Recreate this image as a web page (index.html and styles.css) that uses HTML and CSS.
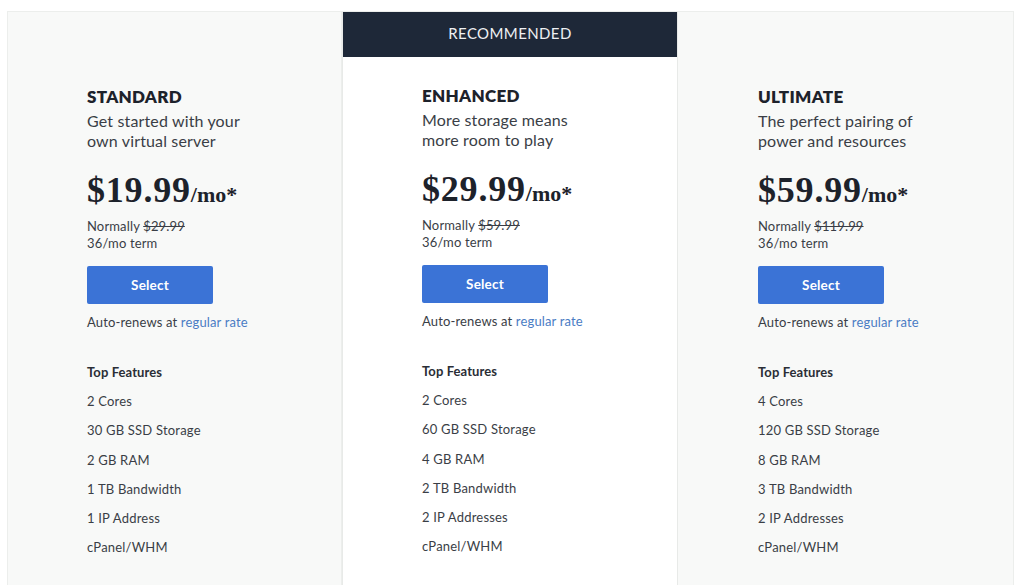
FILE: index.html
```html
<!DOCTYPE html>
<html lang="en">
<head>
<meta charset="utf-8">
<title>Plans</title>
<link rel="stylesheet" href="styles.css">
</head>
<body>
<div class="plans">
  <section class="plan">
    <div class="body">
      <h2 class="name">STANDARD</h2>
      <p class="desc">Get started with your<br>own virtual server</p>
      <div class="price"><span class="amount">$19.99</span><span class="per">/mo*</span></div>
      <p class="normal">Normally <s>$29.99</s><br>36/mo term</p>
      <button class="select">Select</button>
      <p class="renew">Auto-renews at <a href="#">regular rate</a></p>
      <h3 class="feat-title">Top Features</h3>
      <ul class="features">
        <li>2 Cores</li>
        <li>30 GB SSD Storage</li>
        <li>2 GB RAM</li>
        <li>1 TB Bandwidth</li>
        <li>1 IP Address</li>
        <li>cPanel/WHM</li>
      </ul>
    </div>
  </section>
  <section class="plan featured">
    <div class="ribbon">RECOMMENDED</div>
    <div class="body">
      <h2 class="name">ENHANCED</h2>
      <p class="desc">More storage means<br>more room to play</p>
      <div class="price"><span class="amount">$29.99</span><span class="per">/mo*</span></div>
      <p class="normal">Normally <s>$59.99</s><br>36/mo term</p>
      <button class="select">Select</button>
      <p class="renew">Auto-renews at <a href="#">regular rate</a></p>
      <h3 class="feat-title">Top Features</h3>
      <ul class="features">
        <li>2 Cores</li>
        <li>60 GB SSD Storage</li>
        <li>4 GB RAM</li>
        <li>2 TB Bandwidth</li>
        <li>2 IP Addresses</li>
        <li>cPanel/WHM</li>
      </ul>
    </div>
  </section>
  <section class="plan last">
    <div class="body">
      <h2 class="name">ULTIMATE</h2>
      <p class="desc">The perfect pairing of<br>power and resources</p>
      <div class="price"><span class="amount">$59.99</span><span class="per">/mo*</span></div>
      <p class="normal">Normally <s>$119.99</s><br>36/mo term</p>
      <button class="select">Select</button>
      <p class="renew">Auto-renews at <a href="#">regular rate</a></p>
      <h3 class="feat-title">Top Features</h3>
      <ul class="features">
        <li>4 Cores</li>
        <li>120 GB SSD Storage</li>
        <li>8 GB RAM</li>
        <li>3 TB Bandwidth</li>
        <li>2 IP Addresses</li>
        <li>cPanel/WHM</li>
      </ul>
    </div>
  </section>
</div>
</body>
</html>
```

FILE: styles.css
```css
html, body {
  margin: 0;
  padding: 0;
  background: #ffffff;
  overflow: hidden;
}
body {
  font-family: Lato, "Open Sans", Arial, sans-serif;
  color: #33373f;
  padding: 11px 10px 0 7px;
}
.plans {
  display: grid;
  grid-template-columns: 335px 336px 336px;
  height: 620px;
}
.plan {
  background: #f8f9f8;
  border: 1px solid #eceeec;
  border-bottom: none;
  display: flex;
  flex-direction: column;
}
.plan + .plan { border-left: none; }
.plan.featured {
  background: #ffffff;
  border-left: 1px solid #e8eae8;
  border-right: 1px solid #e8eae8;
}
.ribbon {
  background: #1e2838;
  color: #eef0f3;
  height: 45px;
  padding-bottom: 3px;
  box-sizing: border-box;
  display: flex;
  align-items: center;
  justify-content: center;
  font-size: 15px;
  letter-spacing: 0.4px;
}
.body {
  padding: 75px 0 0 79px;
}
.last .body {
  padding-left: 80px;
}
.featured .body {
  padding-top: 29px;
}
.name {
  margin: 0;
  font-size: 17px;
  line-height: 20px;
  font-weight: 800;
  color: #1d222b;
  letter-spacing: 0.3px;
}
.desc {
  margin: 4px 0 0;
  font-size: 16px;
  line-height: 19.5px;
  color: #3a3e46;
  letter-spacing: 0.15px;
}
.price {
  margin-top: 20px;
  font-family: "Liberation Serif", "Times New Roman", serif;
  font-weight: bold;
  color: #1d222b;
  line-height: 40px;
}
.amount {
  font-size: 36px;
  letter-spacing: 0.8px;
}
.per {
  font-size: 22px;
}
.normal {
  margin: 1px 0 0;
  font-size: 13px;
  line-height: 17px;
  color: #3a3e46;
  letter-spacing: 0.15px;
}
.normal s { color: #3a3e46; }
.select {
  display: block;
  margin-top: 14px;
  width: 126px;
  height: 38px;
  border: none;
  border-radius: 2px;
  background: #3b73d6;
  color: #ffffff;
  font-family: inherit;
  font-size: 13.5px;
  font-weight: bold;
  letter-spacing: 0.2px;
  padding: 0;
}
.renew {
  margin: 10px 0 0;
  font-size: 13px;
  line-height: 17px;
  color: #3a3e46;
  letter-spacing: 0.15px;
}
.renew a {
  color: #4a7cc4;
  text-decoration: none;
}
.feat-title {
  margin: 33px 0 0;
  font-size: 13px;
  line-height: 17px;
  font-weight: bold;
  color: #2a2e36;
  letter-spacing: 0.1px;
}
.features {
  list-style: none;
  margin: 12px 0 0;
  padding: 0;
  font-size: 13px;
  color: #3a3e46;
  letter-spacing: 0.2px;
}
.features li {
  line-height: 17px;
  margin-bottom: 12.3px;
}
```
